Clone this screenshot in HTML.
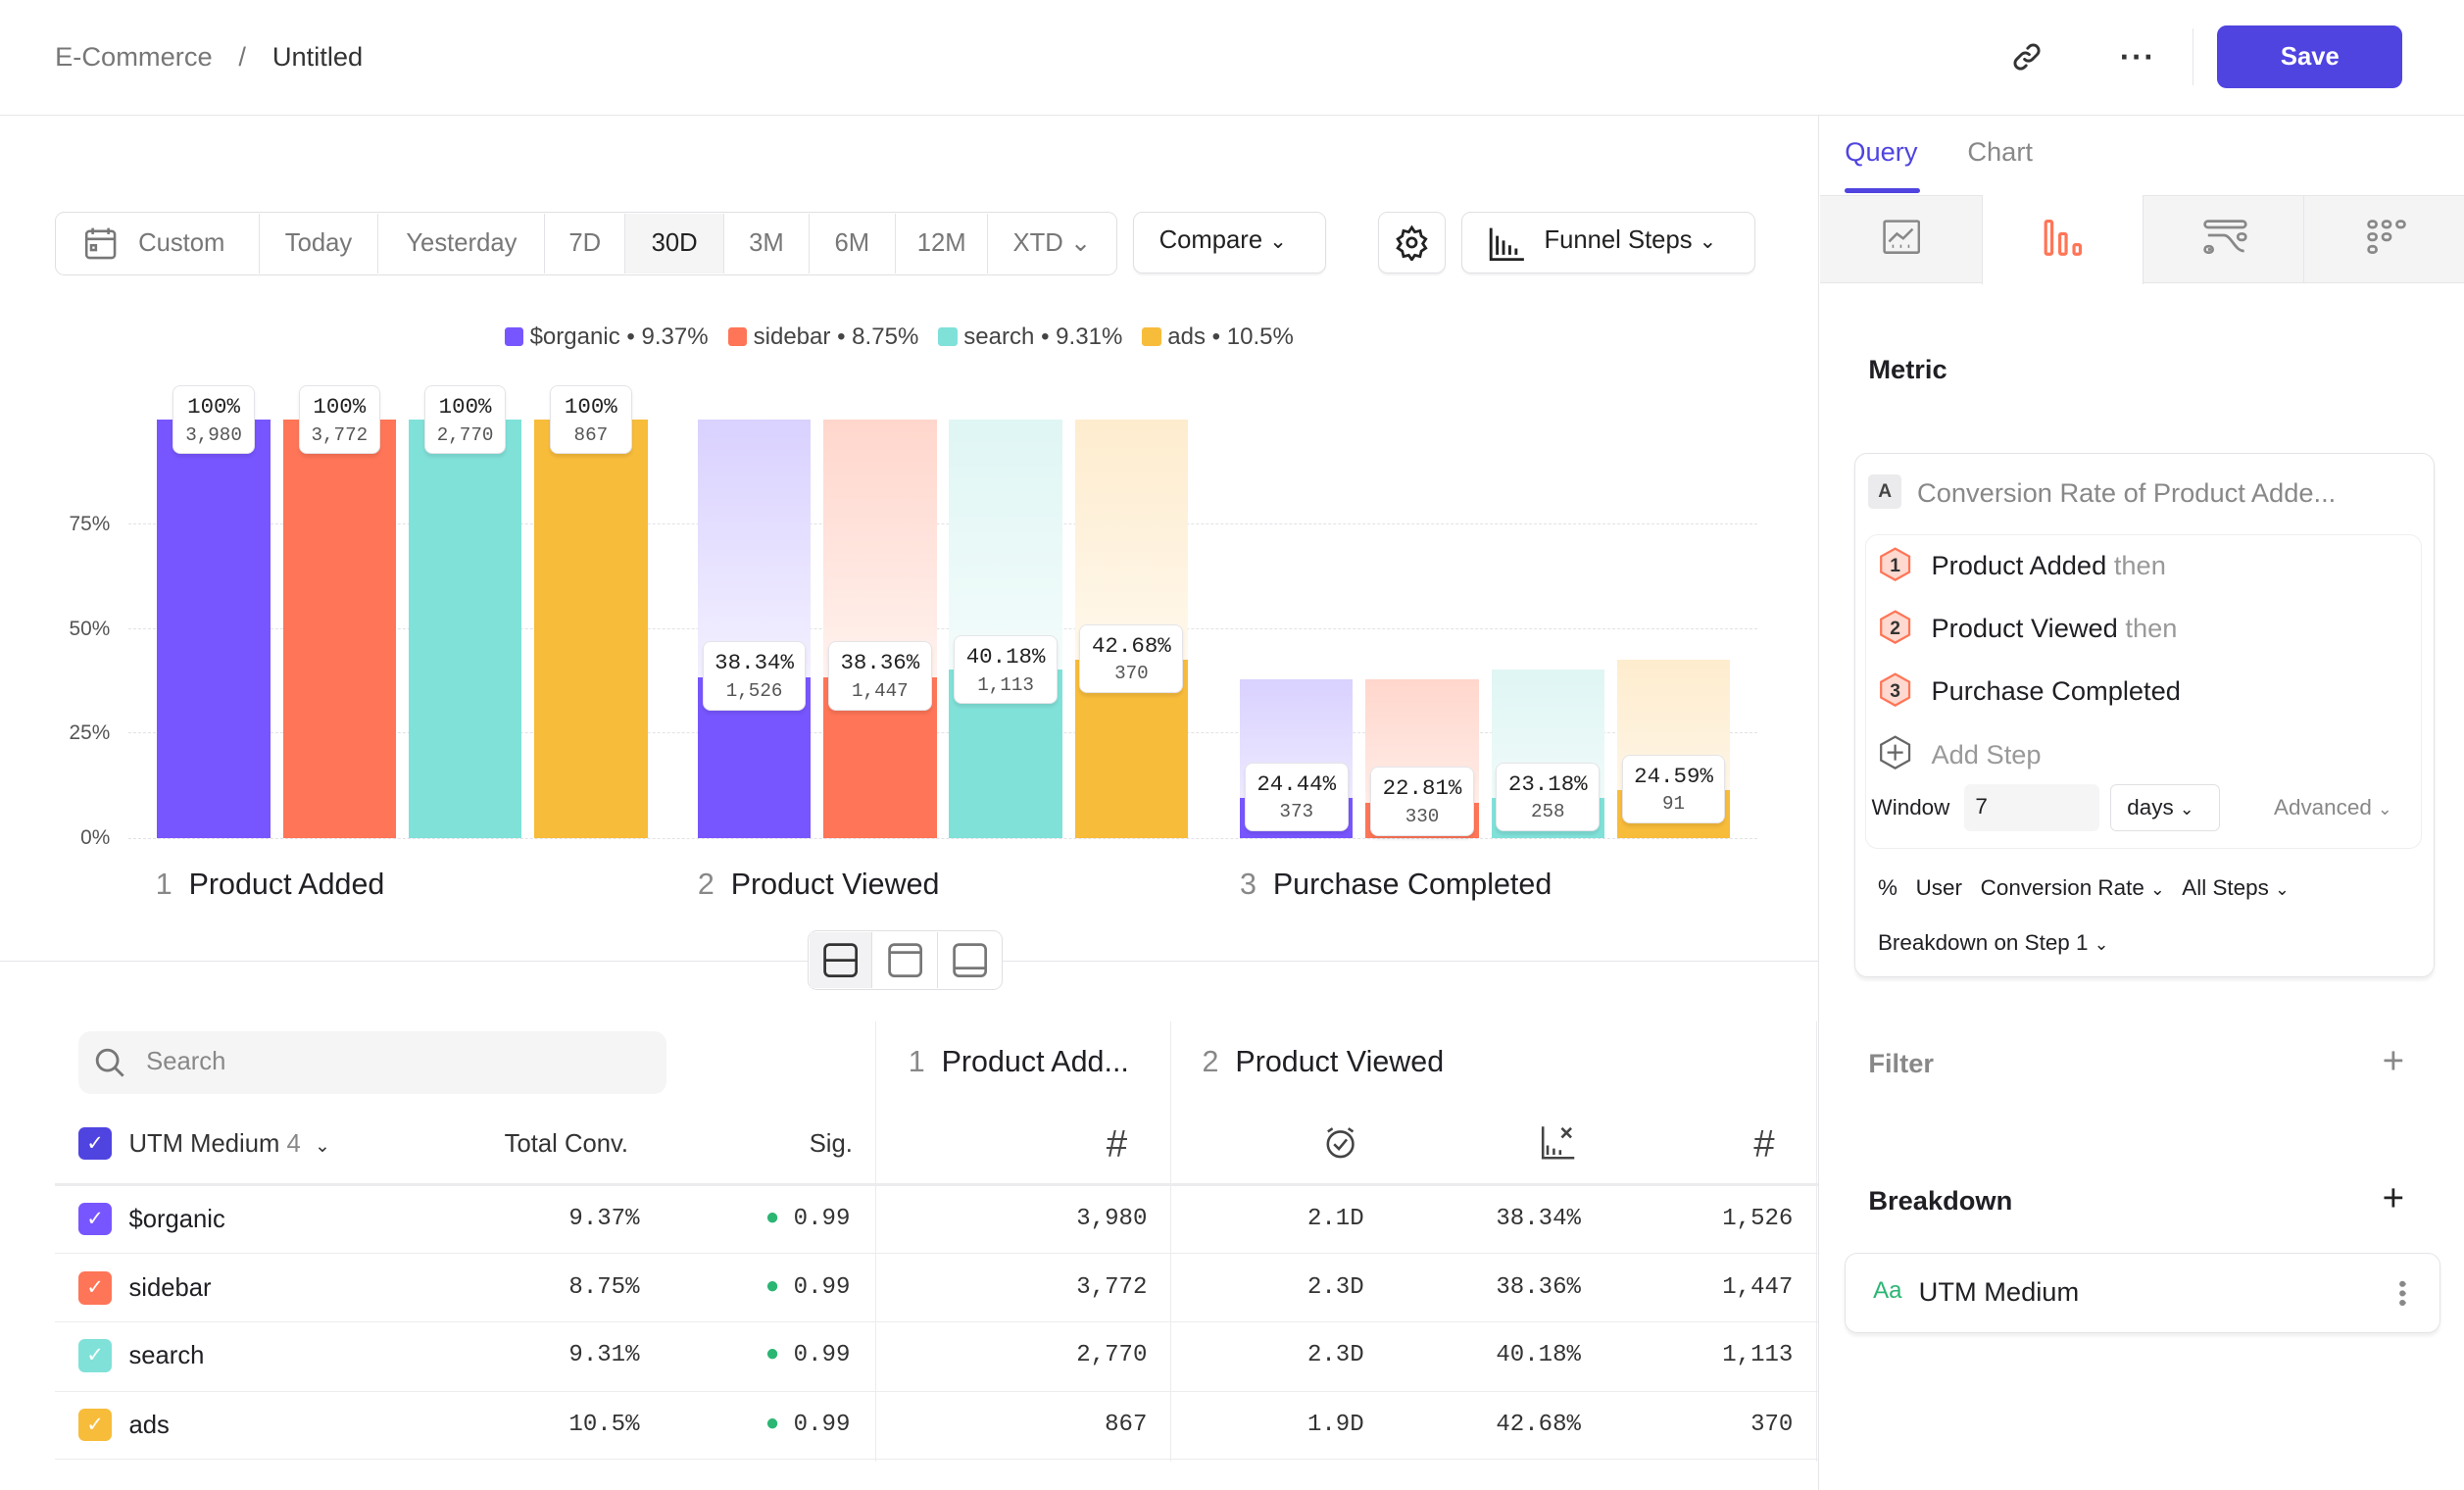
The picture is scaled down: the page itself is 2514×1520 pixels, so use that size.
<!DOCTYPE html>
<html><head><meta charset="utf-8">
<style>
*{box-sizing:border-box;margin:0;padding:0}
html,body{width:2514px;height:1520px;overflow:hidden;background:#fff}
#r{zoom:1.60332;width:1568px;height:948px;position:relative;font-family:"Liberation Sans",sans-serif;color:#1f1f24}
.a{position:absolute}
.lbl{position:absolute;width:66px;height:44px;background:#fff;border:1px solid #e4e4e8;border-radius:5px;box-shadow:0 2px 2px rgba(0,0,0,.08);text-align:center;font-family:"Liberation Mono",monospace}
.lbl b{display:block;font-weight:normal;font-size:14px;color:#222;margin-top:5px}
.lbl i{display:block;font-style:normal;font-size:12px;color:#555;margin-top:3px}
.grid{position:absolute;left:82px;width:1036px;border-top:1px dashed #e2e2e6}
.yl{position:absolute;left:40px;width:30px;text-align:right;font-size:13px;color:#555}
.seg{position:absolute;top:136px;height:38px;border-right:1px solid #e4e4e8;font-size:16px;color:#777;line-height:38px;text-align:center}
.btn{position:absolute;border:1px solid #e0e0e4;border-radius:6px;background:#fff;font-size:16px;line-height:36px;height:39px;box-shadow:0 1px 1px rgba(0,0,0,.05)}
.cb{position:absolute;width:21px;height:21px;border-radius:4px;color:#fff;font-size:13px;text-align:center;line-height:21px}
.row{position:absolute;left:35px;width:1122px;border-top:1px solid #ececef}
.t{position:absolute;font-size:16px}
.n{position:absolute;font-family:"Liberation Mono",monospace;font-size:15px;color:#333;text-align:right}
</style></head><body><div id="r">

<div class="a" style="left:35px;top:26px;font-size:17px;color:#777">E-Commerce <span style="margin:0 12px">/</span> <span style="color:#333">Untitled</span></div>
<svg class="a" style="left:1280px;top:26px" width="20" height="20" viewBox="0 0 20 20" fill="none" stroke="#333" stroke-width="1.8" stroke-linecap="round"><path d="M8.5 11.5a3.5 3.5 0 0 0 5 0l3-3a3.5 3.5 0 0 0-5-5l-1 1"/><path d="M11.5 8.5a3.5 3.5 0 0 0-5 0l-3 3a3.5 3.5 0 0 0 5 5l1-1"/></svg>
<div class="a" style="left:1349px;top:25px;font-size:20px;font-weight:bold;letter-spacing:1px;color:#333">···</div>
<div class="a" style="left:1395px;top:18px;width:1px;height:36px;background:#e6e6ea"></div>
<div class="a" style="left:1411px;top:16px;width:118px;height:40px;background:#4f44e0;border-radius:6px;color:#fff;font-size:16px;font-weight:bold;text-align:center;line-height:40px">Save</div>
<div class="a" style="left:0;top:73px;width:1568px;border-top:1px solid #e6e6ea"></div>
<div class="a" style="left:1157px;top:73px;height:875px;border-left:1px solid #e6e6ea"></div>

<div class="a" style="left:35px;top:135px;width:676px;height:40px;border:1px solid #e0e0e4;border-radius:6px"></div>
<div class="seg" style="left:36px;width:129px;text-align:left;padding-left:52px">Custom</div>
<svg class="a" style="left:53px;top:144px" width="22" height="22" viewBox="0 0 22 22" fill="none" stroke="#777" stroke-width="1.6"><rect x="2" y="3" width="18" height="17" rx="2"/><path d="M2 8h18M6 1v4M16 1v4"/><rect x="5" y="12" width="3" height="3"/></svg>
<div class="seg" style="left:165px;width:76px">Today</div>
<div class="seg" style="left:241px;width:106px">Yesterday</div>
<div class="seg" style="left:347px;width:51px">7D</div>
<div class="seg" style="left:398px;width:63px;background:#f5f5f6;color:#222">30D</div>
<div class="seg" style="left:461px;width:54px">3M</div>
<div class="seg" style="left:515px;width:55px">6M</div>
<div class="seg" style="left:570px;width:59px">12M</div>
<div class="seg" style="left:629px;width:81px;border:none">XTD ⌄</div>
<div class="btn" style="left:721px;top:135px;width:123px;padding-left:16px;color:#222">Compare <span style="font-size:13px">⌄</span></div>
<div class="btn" style="left:877px;top:135px;width:43px"></div>
<svg class="a" style="left:887px;top:143px" width="23" height="23" viewBox="0 0 24 24" fill="none" stroke="#222" stroke-width="1.8"><circle cx="12" cy="12" r="3"/><path d="M12 2l2 3 3.5-.8.8 3.5 3 2-2 3 2 3-3 2-.8 3.5-3.5-.8-2 3-2-3-3.5.8-.8-3.5-3-2 2-3-2-3 3-2 .8-3.5 3.5.8z"/></svg>
<div class="btn" style="left:930px;top:135px;width:187px;padding-left:52px;color:#222">Funnel Steps <span style="font-size:13px">⌄</span></div>
<svg class="a" style="left:947px;top:144px" width="24" height="22" viewBox="0 0 24 22" fill="none" stroke="#222" stroke-width="1.8"><path d="M2 1v20h21M6 6v12M10 9v9M14 12v6M18 14v4"/></svg>

<div class="a" style="left:321px;top:206px;font-size:15px;color:#444;white-space:nowrap">
<span style="display:inline-block;width:12px;height:12px;background:#7856ff;border-radius:2px;vertical-align:-1px"></span> $organic • 9.37% &nbsp;
<span style="display:inline-block;width:12px;height:12px;background:#ff7557;border-radius:2px;vertical-align:-1px"></span> sidebar • 8.75% &nbsp;
<span style="display:inline-block;width:12px;height:12px;background:#80e1d9;border-radius:2px;vertical-align:-1px"></span> search • 9.31% &nbsp;
<span style="display:inline-block;width:12px;height:12px;background:#f8bc3b;border-radius:2px;vertical-align:-1px"></span> ads • 10.5%</div>

<div class="grid" style="top:333px"></div><div class="grid" style="top:400px"></div><div class="grid" style="top:466px"></div><div class="grid" style="top:533px"></div>
<div class="yl" style="top:326px">75%</div><div class="yl" style="top:393px">50%</div><div class="yl" style="top:459px">25%</div><div class="yl" style="top:526px">0%</div>

<div class="a" style="left:100px;top:267px;width:72px;height:266px;background:#7856ff"></div>
<div class="a" style="left:180px;top:267px;width:72px;height:266px;background:#ff7557"></div>
<div class="a" style="left:260px;top:267px;width:72px;height:266px;background:#80e1d9"></div>
<div class="a" style="left:340px;top:267px;width:72px;height:266px;background:#f8bc3b"></div>
<div class="lbl" style="left:110px;top:245px;width:52px"><b>100%</b><i>3,980</i></div>
<div class="lbl" style="left:190px;top:245px;width:52px"><b>100%</b><i>3,772</i></div>
<div class="lbl" style="left:270px;top:245px;width:52px"><b>100%</b><i>2,770</i></div>
<div class="lbl" style="left:350px;top:245px;width:52px"><b>100%</b><i>867</i></div>

<div class="a" style="left:444px;top:267px;width:72px;height:164px;background:linear-gradient(#d9d1ff,#f3f0ff)"></div>
<div class="a" style="left:524px;top:267px;width:72px;height:164px;background:linear-gradient(#ffd6cc,#fff2ee)"></div>
<div class="a" style="left:604px;top:267px;width:72px;height:164px;background:linear-gradient(#dff6f4,#f3fcfb)"></div>
<div class="a" style="left:684px;top:267px;width:72px;height:153px;background:linear-gradient(#feecce,#fff8ec)"></div>
<div class="a" style="left:444px;top:431px;width:72px;height:102px;background:#7856ff"></div>
<div class="a" style="left:524px;top:431px;width:72px;height:102px;background:#ff7557"></div>
<div class="a" style="left:604px;top:426px;width:72px;height:107px;background:#80e1d9"></div>
<div class="a" style="left:684px;top:420px;width:72px;height:113px;background:#f8bc3b"></div>
<div class="lbl" style="left:447px;top:408px"><b>38.34%</b><i>1,526</i></div>
<div class="lbl" style="left:527px;top:408px"><b>38.36%</b><i>1,447</i></div>
<div class="lbl" style="left:607px;top:404px"><b>40.18%</b><i>1,113</i></div>
<div class="lbl" style="left:687px;top:397px"><b>42.68%</b><i>370</i></div>

<div class="a" style="left:789px;top:432px;width:72px;height:101px;background:linear-gradient(#d9d1ff,#f5f2ff)"></div>
<div class="a" style="left:869px;top:432px;width:72px;height:101px;background:linear-gradient(#ffd6cc,#fff4f0)"></div>
<div class="a" style="left:949px;top:426px;width:72px;height:107px;background:linear-gradient(#dff6f4,#f5fcfb)"></div>
<div class="a" style="left:1029px;top:420px;width:72px;height:113px;background:linear-gradient(#feecce,#fff9ee)"></div>
<div class="a" style="left:789px;top:508px;width:72px;height:25px;background:#7856ff"></div>
<div class="a" style="left:869px;top:511px;width:72px;height:22px;background:#ff7557"></div>
<div class="a" style="left:949px;top:508px;width:72px;height:25px;background:#80e1d9"></div>
<div class="a" style="left:1029px;top:503px;width:72px;height:30px;background:#f8bc3b"></div>
<div class="lbl" style="left:792px;top:485px"><b>24.44%</b><i>373</i></div>
<div class="lbl" style="left:872px;top:488px"><b>22.81%</b><i>330</i></div>
<div class="lbl" style="left:952px;top:485px"><b>23.18%</b><i>258</i></div>
<div class="lbl" style="left:1032px;top:480px"><b>24.59%</b><i>91</i></div>

<div class="a" style="left:99px;top:552px;font-size:19px"><span style="color:#888">1</span>&nbsp; Product Added</div>
<div class="a" style="left:444px;top:552px;font-size:19px"><span style="color:#888">2</span>&nbsp; Product Viewed</div>
<div class="a" style="left:789px;top:552px;font-size:19px"><span style="color:#888">3</span>&nbsp; Purchase Completed</div>

<div class="a" style="left:0;top:611px;width:1157px;border-top:1px solid #e6e6ea"></div>
<div class="a" style="left:514px;top:592px;width:124px;height:38px;background:#fff;border:1px solid #e0e0e4;border-radius:6px"></div>
<div class="a" style="left:515px;top:593px;width:40px;height:36px;background:#f2f2f4;border-right:1px solid #e0e0e4"></div>
<div class="a" style="left:596px;top:593px;height:36px;border-left:1px solid #e0e0e4"></div>
<svg class="a" style="left:524px;top:600px" width="22" height="22" viewBox="0 0 22 22" fill="none" stroke="#333" stroke-width="1.7"><rect x="1" y="1" width="20" height="20" rx="3"/><path d="M1 11h20"/></svg>
<svg class="a" style="left:565px;top:600px" width="22" height="22" viewBox="0 0 22 22" fill="none" stroke="#777" stroke-width="1.7"><rect x="1" y="1" width="20" height="20" rx="3"/><path d="M1 6h20"/></svg>
<svg class="a" style="left:606px;top:600px" width="22" height="22" viewBox="0 0 22 22" fill="none" stroke="#777" stroke-width="1.7"><rect x="1" y="1" width="20" height="20" rx="3"/><path d="M1 16h20"/></svg>

<div class="a" style="left:50px;top:656px;width:374px;height:40px;background:#f5f5f6;border-radius:8px"></div>
<svg class="a" style="left:60px;top:666px" width="20" height="20" viewBox="0 0 20 20" fill="none" stroke="#777" stroke-width="1.8"><circle cx="8.5" cy="8.5" r="6.5"/><path d="M13.5 13.5l5 5"/></svg>
<div class="t" style="left:93px;top:667px;color:#888">Search</div>
<div class="a" style="left:557px;top:650px;height:280px;border-left:1px solid #ececef"></div>
<div class="a" style="left:745px;top:650px;height:280px;border-left:1px solid #ececef"></div>
<div class="a" style="left:1156px;top:650px;height:280px;border-left:1px solid #ececef"></div>
<div class="a" style="left:578px;top:665px;font-size:19px"><span style="color:#888">1</span>&nbsp; Product Add...</div>
<div class="a" style="left:765px;top:665px;font-size:19px"><span style="color:#888">2</span>&nbsp; Product Viewed</div>

<div class="cb" style="left:50px;top:717px;background:#4f44e0">✓</div>
<div class="t" style="left:82px;top:719px;color:#333">UTM Medium <span style="color:#888">4</span> &nbsp;<span style="font-size:12px">⌄</span></div>
<div class="t" style="left:321px;top:719px;color:#333">Total Conv.</div>
<div class="t" style="left:515px;top:719px;color:#333">Sig.</div>
<div class="a" style="left:704px;top:715px;font-size:24px;color:#444">#</div>
<div class="a" style="left:1116px;top:715px;font-size:24px;color:#444">#</div>
<svg class="a" style="left:842px;top:716px" width="22" height="22" viewBox="0 0 22 22" fill="none" stroke="#444" stroke-width="1.6"><circle cx="11" cy="12" r="8"/><path d="M7 12l3 3 5-6M3 4l3-2M19 4l-3-2"/></svg>
<svg class="a" style="left:980px;top:715px" width="22" height="24" viewBox="0 0 22 24" fill="none" stroke="#444" stroke-width="1.6"><path d="M2 2v20h20M5 20v-6M9 20v-4M13 20v-3M14 3l6 6M20 3l-6 6"/></svg>

<div class="row" style="top:753px;border-top:2px solid #ececef"></div>
<div class="row" style="top:797px"></div><div class="row" style="top:841px"></div><div class="row" style="top:885px"></div><div class="row" style="top:928px"></div>

<div class="cb" style="left:50px;top:765px;background:#7856ff">✓</div><div class="t" style="left:82px;top:767px">$organic</div>
<div class="cb" style="left:50px;top:809px;background:#ff7557">✓</div><div class="t" style="left:82px;top:811px">sidebar</div>
<div class="cb" style="left:50px;top:852px;background:#80e1d9">✓</div><div class="t" style="left:82px;top:854px">search</div>
<div class="cb" style="left:50px;top:896px;background:#f8bc3b">✓</div><div class="t" style="left:82px;top:898px">ads</div>

<div class="n" style="left:300px;width:107px;top:767px">9.37%</div>
<div class="n" style="left:300px;width:107px;top:811px">8.75%</div>
<div class="n" style="left:300px;width:107px;top:854px">9.31%</div>
<div class="n" style="left:300px;width:107px;top:898px">10.5%</div>
<div class="n" style="left:440px;width:101px;top:767px"><span style="color:#2bb673">●</span> 0.99</div>
<div class="n" style="left:440px;width:101px;top:811px"><span style="color:#2bb673">●</span> 0.99</div>
<div class="n" style="left:440px;width:101px;top:854px"><span style="color:#2bb673">●</span> 0.99</div>
<div class="n" style="left:440px;width:101px;top:898px"><span style="color:#2bb673">●</span> 0.99</div>
<div class="n" style="left:600px;width:130px;top:767px">3,980</div>
<div class="n" style="left:600px;width:130px;top:811px">3,772</div>
<div class="n" style="left:600px;width:130px;top:854px">2,770</div>
<div class="n" style="left:600px;width:130px;top:898px">867</div>
<div class="n" style="left:780px;width:88px;top:767px">2.1D</div>
<div class="n" style="left:780px;width:88px;top:811px">2.3D</div>
<div class="n" style="left:780px;width:88px;top:854px">2.3D</div>
<div class="n" style="left:780px;width:88px;top:898px">1.9D</div>
<div class="n" style="left:900px;width:106px;top:767px">38.34%</div>
<div class="n" style="left:900px;width:106px;top:811px">38.36%</div>
<div class="n" style="left:900px;width:106px;top:854px">40.18%</div>
<div class="n" style="left:900px;width:106px;top:898px">42.68%</div>
<div class="n" style="left:1040px;width:101px;top:767px">1,526</div>
<div class="n" style="left:1040px;width:101px;top:811px">1,447</div>
<div class="n" style="left:1040px;width:101px;top:854px">1,113</div>
<div class="n" style="left:1040px;width:101px;top:898px">370</div>

<div class="a" style="left:1174px;top:87px;font-size:17px;color:#4f44e0">Query</div>
<div class="a" style="left:1174px;top:120px;width:48px;height:3px;background:#4f44e0;border-radius:2px"></div>
<div class="a" style="left:1252px;top:87px;font-size:17px;color:#888">Chart</div>
<div class="a" style="left:1158px;top:124px;width:410px;height:56px;background:#f4f4f5;border-top:1px solid #e6e6ea;border-bottom:1px solid #e6e6ea"></div>
<div class="a" style="left:1261px;top:124px;width:103px;height:57px;background:#fff;border-left:1px solid #e6e6ea;border-right:1px solid #e6e6ea"></div>
<div class="a" style="left:1466px;top:125px;height:55px;border-left:1px solid #e6e6ea"></div>
<svg class="a" style="left:1198px;top:140px" width="24" height="22" viewBox="0 0 24 22" fill="none" stroke="#888" stroke-width="1.6"><rect x="1" y="1" width="22" height="20" rx="1"/><path d="M4 14l5-5 4 3 6-6"/><path d="M6 17h1M11 17h1M16 17h1" stroke-width="2"/></svg>
<svg class="a" style="left:1300px;top:140px" width="26" height="24" viewBox="0 0 26 24" fill="none" stroke="#ff7557" stroke-width="2"><rect x="2" y="1" width="4" height="21" rx="1"/><rect x="11" y="9" width="4" height="13" rx="1"/><rect x="20" y="16" width="4" height="6" rx="1"/></svg>
<svg class="a" style="left:1402px;top:140px" width="28" height="22" viewBox="0 0 28 22" fill="none" stroke="#888" stroke-width="1.7"><rect x="1" y="1" width="26" height="4" rx="2"/><path d="M3 10h10c5 0 7 10 13 10M3 19h2"/><rect x="22" y="9" width="5" height="4" rx="2"/><rect x="1" y="17" width="5" height="4" rx="2"/></svg>
<svg class="a" style="left:1506px;top:140px" width="26" height="22" viewBox="0 0 26 22" fill="none" stroke="#888" stroke-width="1.7"><rect x="1" y="1" width="5" height="4" rx="2"/><rect x="10" y="1" width="5" height="4" rx="2"/><rect x="19" y="1" width="5" height="4" rx="2"/><rect x="1" y="9" width="5" height="4" rx="2"/><rect x="10" y="9" width="5" height="4" rx="2"/><rect x="1" y="17" width="5" height="4" rx="2"/></svg>

<div class="a" style="left:1189px;top:225px;font-size:17px;font-weight:bold">Metric</div>
<div class="a" style="left:1180px;top:288px;width:369px;height:334px;border:1px solid #e4e4e8;border-radius:8px;box-shadow:0 2px 2px rgba(0,0,0,.06)"></div>
<div class="a" style="left:1189px;top:302px;width:21px;height:22px;background:#ebebed;border-radius:3px;font-size:12px;font-weight:bold;text-align:center;line-height:22px;color:#444">A</div>
<div class="a" style="left:1220px;top:304px;font-size:17px;color:#888">Conversion Rate of Product Adde...</div>
<div class="a" style="left:1187px;top:340px;width:354px;height:200px;border:1px solid #efeff1;border-radius:8px"></div>
<svg class="a" style="left:1195px;top:348px" width="22" height="22" viewBox="0 0 22 22"><path d="M11 1l9 5v10l-9 5-9-5V6z" fill="#ffd9cf" stroke="#ff7557" stroke-width="1.4"/><text x="11" y="15.5" text-anchor="middle" font-size="12" font-weight="bold" font-family="Liberation Sans" fill="#333">1</text></svg>
<svg class="a" style="left:1195px;top:388px" width="22" height="22" viewBox="0 0 22 22"><path d="M11 1l9 5v10l-9 5-9-5V6z" fill="#ffd9cf" stroke="#ff7557" stroke-width="1.4"/><text x="11" y="15.5" text-anchor="middle" font-size="12" font-weight="bold" font-family="Liberation Sans" fill="#333">2</text></svg>
<svg class="a" style="left:1195px;top:428px" width="22" height="22" viewBox="0 0 22 22"><path d="M11 1l9 5v10l-9 5-9-5V6z" fill="#ffd9cf" stroke="#ff7557" stroke-width="1.4"/><text x="11" y="15.5" text-anchor="middle" font-size="12" font-weight="bold" font-family="Liberation Sans" fill="#333">3</text></svg>
<svg class="a" style="left:1195px;top:468px" width="22" height="22" viewBox="0 0 22 22" fill="none" stroke="#666" stroke-width="1.4"><path d="M11 1l9 5v10l-9 5-9-5V6z"/><path d="M11 6v10M6 11h10"/></svg>
<div class="a" style="left:1229px;top:350px;font-size:17px">Product Added <span style="color:#999">then</span></div>
<div class="a" style="left:1229px;top:390px;font-size:17px">Product Viewed <span style="color:#999">then</span></div>
<div class="a" style="left:1229px;top:430px;font-size:17px">Purchase Completed</div>
<div class="a" style="left:1229px;top:470px;font-size:17px;color:#999">Add Step</div>
<div class="a" style="left:1191px;top:506px;font-size:14px">Window</div>
<div class="a" style="left:1250px;top:499px;width:86px;height:30px;background:#f5f5f6;border-radius:4px;font-size:14px;padding:6px 7px">7</div>
<div class="a" style="left:1343px;top:499px;width:70px;height:30px;border:1px solid #e0e0e4;border-radius:4px;font-size:14px;padding:6px 10px">days <span style="font-size:11px">⌄</span></div>
<div class="a" style="left:1447px;top:506px;font-size:14px;color:#888">Advanced <span style="font-size:11px">⌄</span></div>
<div class="a" style="left:1195px;top:557px;font-size:14px">%&nbsp;&nbsp; User&nbsp;&nbsp; Conversion Rate <span style="font-size:11px">⌄</span>&nbsp;&nbsp; All Steps <span style="font-size:11px">⌄</span></div>
<div class="a" style="left:1195px;top:592px;font-size:14px">Breakdown on Step 1 <span style="font-size:11px">⌄</span></div>

<div class="a" style="left:1189px;top:667px;font-size:17px;font-weight:bold;color:#888">Filter</div>
<div class="a" style="left:1516px;top:662px;font-size:24px;color:#888">+</div>
<div class="a" style="left:1189px;top:754px;font-size:17px;font-weight:bold">Breakdown</div>
<div class="a" style="left:1516px;top:749px;font-size:24px;color:#222">+</div>
<div class="a" style="left:1174px;top:797px;width:379px;height:51px;border:1px solid #e4e4e8;border-radius:8px;box-shadow:0 2px 2px rgba(0,0,0,.06)"></div>
<div class="a" style="left:1192px;top:813px;font-size:15px;color:#2bb673">Aa</div>
<div class="a" style="left:1221px;top:812px;font-size:17px">UTM Medium</div>
<div class="a" style="left:1527px;top:814px;width:4px;height:18px;background:radial-gradient(circle,#888 1.8px,transparent 2px) 0 0/4px 6px"></div>

</div></body></html>
